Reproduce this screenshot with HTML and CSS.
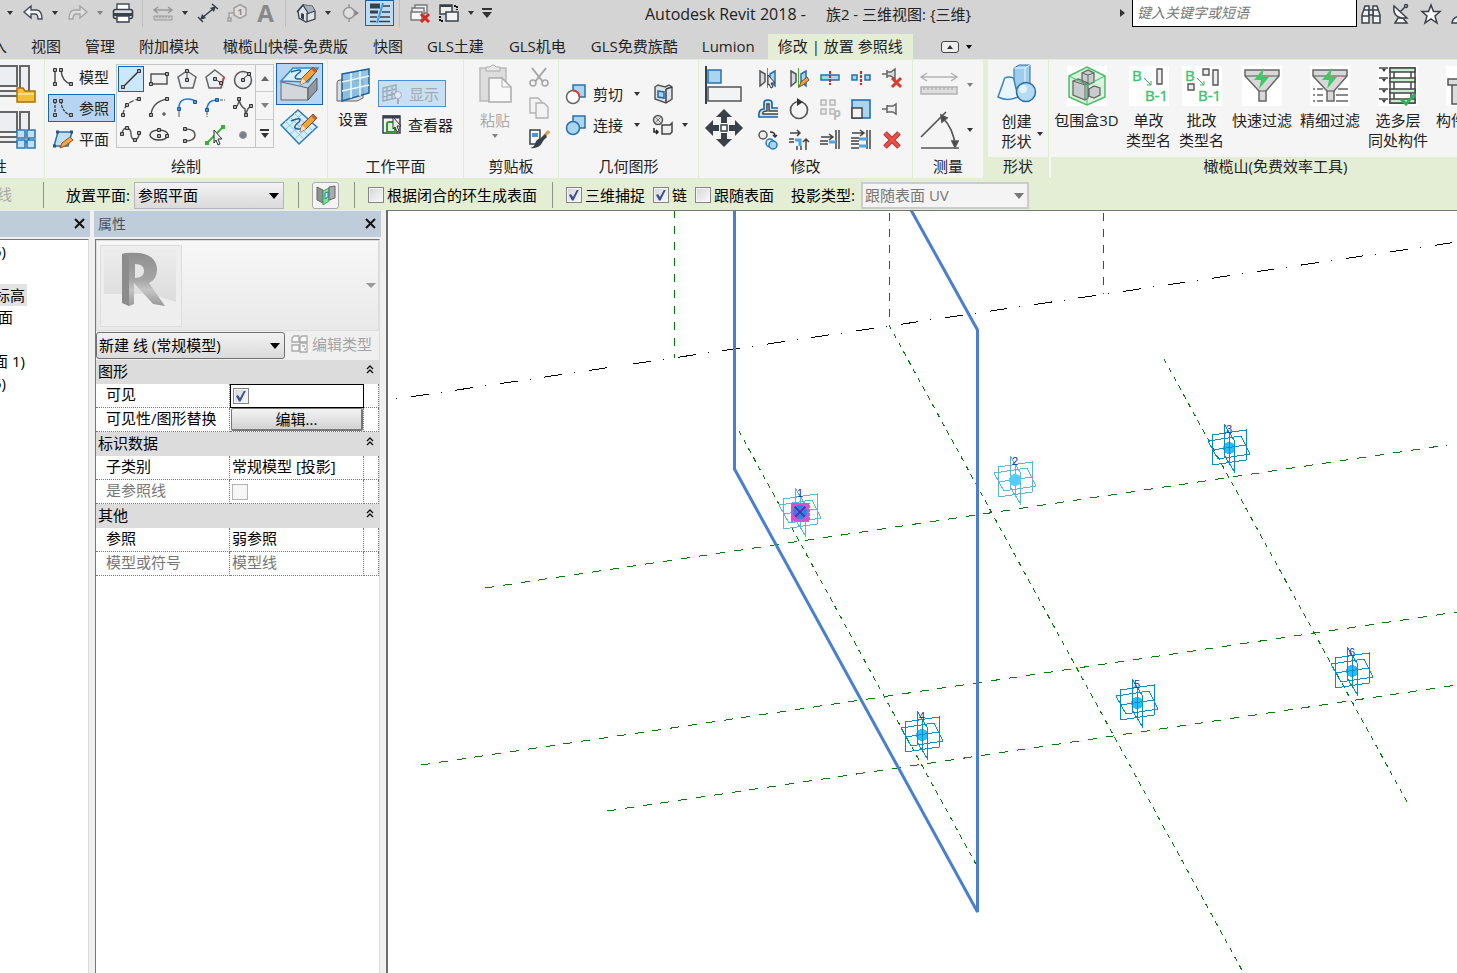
FILE: index.html
```html
<!DOCTYPE html>
<html lang="zh-CN">
<head>
<meta charset="utf-8">
<title>Autodesk Revit 2018</title>
<link rel="stylesheet" href="styles.css">
</head>
<body>
<div class="app">

<header class="titlebar">
  <div class="quick">
    <i class="drop"></i>
    <button class="tool" aria-label="放弃"><svg width="22" height="20" viewBox="0 0 22 20"><path d="M2 9 9 3v4h6q5 1 5 9h-4q0-5-3-5H9v4z" fill="#f4f4f4" stroke="#454b55" stroke-width="1.4"/></svg></button>
    <i class="drop"></i>
    <button class="tool" aria-label="重做"><svg width="22" height="20" viewBox="0 0 22 20"><path d="M20 9 13 3v4H7q-5 1-5 9h4q0-5 3-5h4v4z" fill="#dedede" stroke="#a5a5a5" stroke-width="1.4"/></svg></button>
    <i class="drop dim"></i>
    <button class="tool" aria-label="打印"><svg width="22" height="20" viewBox="0 0 22 20"><path d="M5 1h12v7H5z" fill="#fff" stroke="#454b55" stroke-width="1.4"/><rect x="1.500" y="6.500" width="19" height="9" rx="2" fill="#d9dde2" stroke="#39404a" stroke-width="1.6"/><path d="M2 10h18v3H2z" fill="#39404a"/><path d="M5 13h12v6H5z" fill="#fff" stroke="#39404a" stroke-width="1.4"/></svg></button>
    <i class="bar"></i>
    <button class="tool" aria-label="测量"><svg width="22" height="20" viewBox="0 0 22 20" fill="none" stroke="#999"><path d="M2 7h18M6 4 2 7l4 3M16 4l4 3-4 3" stroke-width="1.500"/><path d="M2 13h18v4H2z" fill="#ccc"/><path d="M5 13v2m3-2v2m3-2v2m3-2v2m3-2v2"/></svg></button>
    <i class="drop"></i>
    <button class="tool" aria-label="对齐尺寸标注"><svg width="22" height="20" viewBox="0 0 22 20"><path d="m5 15 12-10M1 14l5 5M15 1l6 5" stroke="#39404a" stroke-width="1.500"/><path d="m3 17 2-6 4 4zM19 3l-6 2 4 4z" fill="#39404a"/></svg></button>
    <button class="tool" aria-label="按类别标记"><svg width="22" height="20" viewBox="0 0 22 20"><path d="M2 15h3v3H2zM3 15v-5h5M14 1.500l6 3.500v7l-6 3.500L8 12V5z" fill="#dedede" stroke="#a0a0a0" stroke-width="1.500"/><text class="glyph-tag" x="14" y="12">1</text></svg></button>
    <button class="tool" aria-label="文字"><span class="letter-a">A</span></button>
    <i class="bar"></i>
    <button class="tool" aria-label="默认三维视图"><svg width="22" height="20" viewBox="0 0 22 20"><path d="m3 8 5-6 9 1 3 5v8l-9 3-7-4z" fill="#dfe3e8" stroke="#39404a" stroke-width="1.300"/><path d="m8 2 9 1 3 5-7 2z" fill="#aab1ba"/><path d="m2 9 6-7 5 8M12 10v9M12 11l8-3" fill="none" stroke="#39404a" stroke-width="1.300"/><path d="m6 10 3 1v6l-3-2z" fill="#39404a"/></svg></button>
    <i class="drop"></i>
    <button class="tool" aria-label="剖面"><svg width="22" height="20" viewBox="0 0 22 20"><path d="m9 3 10 7-10 7z" fill="#858585"/><circle cx="9" cy="10" r="5.500" fill="#e0e0e0" stroke="#999" stroke-width="1.500"/><path d="M9 1v3m0 12v3" stroke="#999" stroke-width="1.500"/></svg></button>
    <button class="tool picked" aria-label="细线"><svg width="24" height="22" viewBox="0 0 24 22"><path d="M15 4h7M14 10h8M2 15h7m3 0h10M2 19.500h6m3 0h11" stroke="#39404a" stroke-width="1.500"/><path d="M2 4h10" stroke="#39404a" stroke-width="5"/><path d="M2 10h8" stroke="#39404a" stroke-width="3"/><path d="m9 21 6-20" stroke="#3c9bf0" stroke-width="2"/></svg></button>
    <i class="bar"></i>
    <button class="tool" aria-label="关闭隐藏窗口"><svg width="22" height="20" viewBox="0 0 22 20"><path d="M6 2h12v8H6z" fill="#eee" stroke="#777" stroke-width="1.400"/><path d="M3 5h12v8H3z" fill="#eee" stroke="#777" stroke-width="1.400"/><path d="M2 9h11v8H2z" fill="#f7f7f7" stroke="#777" stroke-width="1.400"/><path d="m12 11 8 8m0-8-8 8" stroke="#d02c22" stroke-width="3"/></svg></button>
    <button class="tool" aria-label="切换窗口"><svg width="22" height="20" viewBox="0 0 22 20"><path d="M2 2h12v9H2z" fill="#eee" stroke="#39404a" stroke-width="1.500"/><path d="M2 3h12" stroke="#39404a" stroke-width="2"/><path d="M8 9h12v9H8z" fill="#f4f4f4" stroke="#39404a" stroke-width="1.500"/><path d="M16 3h3v4M2 13v5h4" fill="none" stroke="#111" stroke-width="2" stroke-dasharray="2 1"/></svg></button>
    <i class="drop"></i>
    <button class="custom" aria-label="自定义快速访问工具栏"><i class="drop"></i></button>
  </div>
  <div class="caption"><span class="product">Autodesk Revit 2018 -</span><span>族2 - 三维视图: {三维}</span></div>
  <div class="help">
    <i class="tri-right"></i>
    <input class="search" type="text" placeholder="键入关键字或短语" aria-label="搜索">
    <button class="hbtn" aria-label="查找"><svg width="22" height="22" viewBox="0 0 22 22" fill="#f4f4f4" stroke="#39404a" stroke-width="1.500"><path d="M2 20v-8l3-9h4v17zM20 20v-8l-3-9h-4v17z"/><path d="M9 7h4v5H9zM2 13h7m4 0h7M4 7h5m4 0h5"/></svg></button>
    <button class="hbtn" aria-label="通讯中心"><svg width="22" height="22" viewBox="0 0 22 22" fill="#f4f4f4" stroke="#39404a" stroke-width="1.500"><path d="m5 20 3-5h5l4 5z"/><path d="M4 3q-2 13 13 12zM10 9l5-5"/><circle cx="16" cy="3" r="1.500"/></svg></button>
    <button class="hbtn" aria-label="收藏夹"><svg width="22" height="22" viewBox="0 0 22 22"><path d="m11 2 2.500 6.500H20l-5 4.500 2 7-6-4-6 4 2-7-5-4.500h6.500z" fill="#fafafa" stroke="#39404a" stroke-width="1.500"/></svg></button>
    <button class="hbtn" aria-label="登录"><svg width="22" height="22" viewBox="0 0 22 22"><circle cx="13" cy="7" r="4" fill="#eee" stroke="#39404a"/><path d="M2 20q1-7 10-7t10 7z" fill="#eee" stroke="#39404a" stroke-width="1.500"/></svg></button>
  </div>
</header>

<nav class="tabs">
  <button class="tab first">插入</button><button class="tab">视图</button><button class="tab">管理</button><button class="tab">附加模块</button><button class="tab latin">橄榄山快模-免费版</button><button class="tab">快图</button><button class="tab latin">GLS土建</button><button class="tab latin">GLS机电</button><button class="tab">GLS免费族酷</button><button class="tab latin">Lumion</button><button class="tab active">修改 | 放置 参照线</button>
  <button class="minimize" aria-label="最小化功能区"><span class="mini-box"></span><i class="drop black"></i></button>
</nav>

<section class="ribbon">
  <div class="panel p-prop">
    <div class="body">
      <button class="cut" aria-label="族类型"><svg width="38" height="42" viewBox="0 0 38 42"><path d="M-2 2h19v20H-2zM20 2h9v30H-2v-5h22z" fill="#eceef1" stroke="#666" stroke-width="2"/><path d="M17 24h6l2 3h10v11H17z" fill="#f3bf3b" stroke="#a97306" stroke-width="1.500"/><path d="M18 30h16" stroke="#ffdf85" stroke-width="2"/></svg></button>
      <button class="cut" aria-label="属性"><svg width="38" height="42" viewBox="0 0 38 42"><path d="M-2 2h19v20H-2zM20 2h9v30H-2v-5h22z" fill="#eceef1" stroke="#666" stroke-width="2"/><path d="M17 20h8v8h-8zm10 0h8v8h-8zM17 30h8v8h-8zm10 0h8v8h-8z" fill="#bfe1f7" stroke="#2b7cbd" stroke-width="1.600"/></svg></button>
    </div>
    <div class="label cutlabel">属性</div>
  </div>

  <div class="panel p-draw">
    <div class="body">
      <div class="stack">
        <button class="row"><svg width="22" height="22" viewBox="0 0 22 22"><path d="M3 4v14M9 4q1 12 10 14" fill="none" stroke="#444" stroke-width="1.400"/><path d="M1.500 2.500h3v3h-3zm0 14h3v3h-3zm6-14h3v3h-3zm10 14h3v3h-3z" fill="#aaa" stroke="#333"/></svg>模型</button>
        <button class="row on"><svg width="22" height="22" viewBox="0 0 22 22"><path d="M3 4v14M9 4q1 12 10 14" fill="none" stroke="#444" stroke-width="1.400" stroke-dasharray="3 1"/><path d="M1.500 2.500h3v3h-3zm0 14h3v3h-3zm6-14h3v3h-3zm10 14h3v3h-3z" fill="#aaa" stroke="#333"/></svg>参照</button>
        <button class="row"><svg width="22" height="22" viewBox="0 0 22 22"><path d="M6 4h14l-4 14H2z" fill="#bfe0f5" stroke="#2b6ea8" stroke-width="1.500"/><path d="M4 2.500h3v3H4zm14 0h3v3h-3zm-17 14h3v3H1z" fill="#36536c"/><path d="m8 20 2-5 8-6 3 3-8 6z" fill="#f2a93b" stroke="#a9481a"/></svg>平面</button>
      </div>
      <div class="gallery">
        <div class="cells">
          <button class="cell on" aria-label="直线"><svg width="22" height="22" viewBox="0 0 22 22"><path d="M3 19 19 3" stroke="#333" stroke-width="1.500"/><path d="M1.500 17.500h3v3h-3zm16-16h3v3h-3z" fill="#aaa" stroke="#333"/></svg></button>
          <button class="cell" aria-label="矩形"><svg width="22" height="22" viewBox="0 0 22 22"><path d="M3 6h16v10H3z" fill="#eef0f2" stroke="#555" stroke-width="1.500"/><path d="M1.500 14.500h3v3h-3zm16-10h3v3h-3z" fill="#aaa" stroke="#333"/></svg></button>
          <button class="cell" aria-label="内接多边形"><svg width="22" height="22" viewBox="0 0 22 22"><path d="m11 3 9 6-3 11H5L2 9z" fill="#eef0f2" stroke="#666" stroke-width="1.500"/><path d="M11 4v7" stroke="#444"/><path d="M9.500 1.500h3v3h-3zm0 9h3v3h-3z" fill="#aaa" stroke="#333"/></svg></button>
          <button class="cell" aria-label="外接多边形"><svg width="22" height="22" viewBox="0 0 22 22"><path d="m11 2 9 7-3 11H5L2 9z" fill="#eef0f2" stroke="#666" stroke-width="1.500"/><path d="m20 9-3 11" stroke="#e33" stroke-width="2" stroke-dasharray="4 1"/><path d="m11 11 6 4" stroke="#444"/><path d="M9.500 9.500h3v3h-3zm6 4h3v3h-3z" fill="#aaa" stroke="#333"/></svg></button>
          <button class="cell" aria-label="圆形"><svg width="22" height="22" viewBox="0 0 22 22"><circle cx="11" cy="12" r="8.500" fill="#eef0f2" stroke="#555" stroke-width="1.500"/><path d="m11 11 6-5" stroke="#444"/><path d="M9.500 10.500h3v3h-3zm6-6h3v3h-3z" fill="#aaa" stroke="#333"/></svg></button>
          <button class="cell" aria-label="起点-终点-半径弧"><svg width="22" height="22" viewBox="0 0 22 22"><path d="M3 19Q4 6 19 3" fill="none" stroke="#555" stroke-width="1.400" stroke-dasharray="5 2"/><path d="M1.500 17.500h3v3h-3zm4-10h3v3h-3zm12-6h3v3h-3z" fill="#aaa" stroke="#333"/></svg></button>
          <button class="cell" aria-label="圆心-端点弧"><svg width="22" height="22" viewBox="0 0 22 22"><path d="M3 19Q4 6 19 3" fill="none" stroke="#555" stroke-width="1.400"/><path d="M1.500 17.500h3v3h-3zm16-16h3v3h-3z" fill="#aaa" stroke="#333"/><path d="M14 18h4m-2-2v4" stroke="#333"/></svg></button>
          <button class="cell" aria-label="相切-端点弧"><svg width="22" height="22" viewBox="0 0 22 22"><path d="M3 14Q2 3 12 3q5 0 8 3" fill="none" stroke="#2a7ad0" stroke-width="1.600"/><path d="M3 15v6" stroke="#555"/><path d="M1.500 11.500h3v3h-3zm16-7h3v3h-3z" fill="#4a93dc" stroke="#165a9f"/></svg></button>
          <button class="cell" aria-label="圆角弧"><svg width="22" height="22" viewBox="0 0 22 22"><path d="M3 14Q3 4 13 4" fill="none" stroke="#2a7ad0" stroke-width="1.600"/><path d="M3 16v5m13-17h5" stroke="#555" stroke-dasharray="3 1"/><path d="M1.500 12.500h3v3h-3zm10-10h3v3h-3z" fill="#4a93dc" stroke="#165a9f"/></svg></button>
          <button class="cell" aria-label="样条曲线"><svg width="22" height="22" viewBox="0 0 22 22"><path d="M3 11q3 0 4-7 2 7 6 9 0 3 1 6 1-8 6-9" fill="none" stroke="#555" stroke-width="1.500"/><path d="M1.500 9.500h3v3h-3zm4-8h3v3h-3zm7 16h3v3h-3zm5-9h3v3h-3z" fill="#aaa" stroke="#333"/></svg></button>
          <button class="cell" aria-label="通过点的样条曲线"><svg width="22" height="22" viewBox="0 0 22 22"><path d="M2 9q1-5 5-5 4 1 4 6t4 6q4-1 4-7" fill="none" stroke="#555" stroke-width="1.400"/><path d="M.5 8.500h3v3h-3zm5-6h3v3h-3zm8 12h3v3h-3zm4-7h3v3h-3z" fill="#aaa" stroke="#333"/></svg></button>
          <button class="cell" aria-label="椭圆"><svg width="22" height="22" viewBox="0 0 22 22"><ellipse cx="11" cy="11" rx="9" ry="5" fill="#eef0f2" stroke="#444" stroke-width="1.500"/><path d="M9.500 4.500h3v3h-3zm0 6h3v3h-3zm8 0h3v3h-3z" fill="#aaa" stroke="#333"/></svg></button>
          <button class="cell" aria-label="半椭圆"><svg width="22" height="22" viewBox="0 0 22 22"><path d="M9 5q10 0 10 6T9 17" fill="none" stroke="#555" stroke-width="1.500"/><path d="M7.500 3.500h3v3h-3zm0 12h3v3h-3z" fill="#aaa" stroke="#333"/></svg></button>
          <button class="cell" aria-label="拾取线"><svg width="22" height="22" viewBox="0 0 22 22"><path d="M3 19 19 3" stroke="#35b52c" stroke-width="2"/><path d="M1 17h4v4H1zM17 1h4v4h-4z" fill="#35b52c"/><path d="m10 6 8 9h-4l2 5-2 1-2-5-2 3z" fill="#eee" stroke="#333"/></svg></button>
          <button class="cell" aria-label="点图元"><svg width="22" height="22" viewBox="0 0 22 22"><circle cx="11" cy="11" r="3.500" fill="#777c85" stroke="#999"/></svg></button>
        </div>
        <div class="scroll"><button aria-label="上一行"><i class="up"></i></button><button aria-label="下一行"><i class="drop grey"></i></button><button aria-label="更多"><i class="drop more"></i></button></div>
      </div>
      <div class="bigpair">
        <button class="big on" aria-label="在面上绘制"><svg width="42" height="38" viewBox="0 0 42 38"><path d="m2 17 27 6v12H2z" fill="#d3d6da" stroke="#666"/><path d="m29 23 9-10v12l-9 10z" fill="#9299a1" stroke="#555"/><path d="m2 16 12-13h25l-10 14z" fill="#d7effc" stroke="#2c8dca" stroke-width="1.500"/><path d="M12 7q12-4 9 0-9 7-1 7h5" fill="none" stroke="#1c6299" stroke-width="1.500"/><path d="m21 20 2-7L34 2l4 4-11 11z" fill="#f0a53b" stroke="#7d4a20"/><path d="m23 13 4 4-6 3z" fill="#f5dfc0"/><path d="m32 4 2-2 4 4-2 2z" fill="#c8613a"/></svg></button>
        <button class="big" aria-label="在工作平面上绘制"><svg width="42" height="38" viewBox="0 0 42 38"><path d="M2 17 19 2l19 17-18 17z" fill="#d7effc" stroke="#2c7cb8" stroke-width="1.500"/><path d="m6 13 19 18M11 9l18 18M15 5l19 18M7 21 23 6M11 26 29 11M16 31l17-16" stroke="#8cc5e8"/><path d="M12 13q12-5 8 1-8 6-1 7h5" fill="none" stroke="#1c6299" stroke-width="1.500"/><path d="m21 24 2-7L34 6l4 4-11 11z" fill="#f0a53b" stroke="#7d4a20"/><path d="m23 17 4 4-6 3z" fill="#f5dfc0"/><path d="m32 8 2-2 4 4-2 2z" fill="#c8613a"/></svg></button>
      </div>
    </div>
    <div class="label">绘制</div>
  </div>

  <div class="panel p-plane">
    <div class="body">
      <button class="vbtn"><svg width="38" height="38" viewBox="0 0 38 38"><path d="M3 16q0-3 3-3h20q3 0 3 3v15l-6 3H3z" fill="#d9dce0" stroke="#666"/><path d="m8 7 27-5v24L8 34z" fill="#79b7df" fill-opacity=".8" stroke="#1d6399" stroke-width="1.500"/><path d="m8 15 27-6M8 24l27-6M17 6v25M26 4v25" stroke="#e8f6ff" stroke-width="1.500"/></svg><span>设置</span></button>
      <div class="stack2">
        <button class="row show" disabled><svg width="22" height="22" viewBox="0 0 22 22"><path d="m2 5 13-3v13L2 18zM2 9l13-3M2 14l13-4M6 4v13m5-14v13" fill="none" stroke="#9fadbb" stroke-width="1.500"/><circle cx="17" cy="12" r="3.500" fill="#e4ebf2" stroke="#9fadbb"/><path d="M17 16v5" stroke="#9fadbb" stroke-width="2"/></svg>显示</button>
        <button class="row"><svg width="22" height="22" viewBox="0 0 22 22"><path d="M2 2h17v17H2z" fill="#f3f3f3" stroke="#39404a" stroke-width="1.500"/><path d="M2 3h17" stroke="#39404a" stroke-width="3"/><path d="M6 10q0-2 2-2h6v10H6z" fill="#dff1dc" stroke="#379535" stroke-width="2"/><path d="m12 3 8 9h-4l2 5-2 1-2-5-2 2z" fill="#eee" stroke="#333"/></svg>查看器</button>
      </div>
    </div>
    <div class="label">工作平面</div>
  </div>

  <div class="panel p-clip">
    <div class="body">
      <button class="vbtn" disabled><svg width="38" height="40" viewBox="0 0 38 40"><path d="M4 4h26v33H4z" fill="#ddd" stroke="#bbb" stroke-width="1.500"/><path d="M10 7V3h4q3-4 6 0h4v4z" fill="#e8e8e8" stroke="#aaa"/><path d="M13 14h13l9 9v15H13z" fill="#f8f8f8" stroke="#aaa" stroke-width="1.500"/><path d="M26 14v9h9" fill="none" stroke="#aaa"/></svg><span>粘贴</span><i class="drop grey"></i></button>
      <div class="trio">
        <svg width="22" height="22" viewBox="0 0 22 22" fill="none" stroke="#a5a5a5" stroke-width="2"><path d="m4 2 11 14M18 2 7 16"/><circle cx="5" cy="17" r="3" stroke-width="1.500"/><circle cx="17" cy="17" r="3" stroke-width="1.500"/></svg>
        <svg width="22" height="22" viewBox="0 0 22 22" fill="#f3f3f3" stroke="#b3b3b3" stroke-width="1.400"><path d="M2 1h8l4 4v11H2z"/><path d="M8 6h8l4 4v11H8z"/></svg>
        <svg width="22" height="22" viewBox="0 0 22 22"><path d="M2 2h10v14H2z" fill="#f7f7f7" stroke="#39404a" stroke-width="1.500"/><path d="M4 5h6v4H4z" fill="#4f94ca"/><path d="m21 3-8 9" stroke="#d89a4d" stroke-width="3"/><path d="m17 6-4 4q-5 1-6 6-1 3-5 4 9 1 12-5 1-3 5-6z" fill="#39404a"/></svg>
      </div>
    </div>
    <div class="label">剪贴板</div>
  </div>

  <div class="panel p-geo">
    <div class="body">
      <div class="grow">
        <button class="row"><svg width="22" height="22" viewBox="0 0 22 22"><path d="M8 2h12v12H8z" fill="#a9d5f0" stroke="#2870a8" stroke-width="1.500"/><circle cx="8" cy="14" r="6.500" fill="#fff" stroke="#666" stroke-width="1.500"/><path d="M8 7.500a6.500 6.500 0 0 1 6.500 6.500" fill="none" stroke="#e33" stroke-width="2"/></svg>剪切<i class="drop"></i></button>
        <button class="small" aria-label="拆分面"><svg width="22" height="22" viewBox="0 0 22 22"><path d="m3 4 3-2 7 2 4-2 3 2v12l-6 4-11-4z" fill="#dfe3e8" stroke="#555" stroke-width="1.500"/><path d="m14 6 6-2M14 6v14" stroke="#39404a" stroke-width="1.500"/><path d="m6 8 6 1v6l-6-1z" fill="#a8d4f1" stroke="#2368a1" stroke-width="1.500"/></svg></button>
      </div>
      <div class="grow">
        <button class="row"><svg width="22" height="22" viewBox="0 0 22 22"><path d="M8 2h12v12H8z" fill="#a9d5f0" stroke="#2870a8" stroke-width="1.500"/><circle cx="8" cy="14" r="6.500" fill="#a9d5f0" stroke="#2870a8" stroke-width="1.500"/></svg>连接<i class="drop"></i></button>
        <button class="small" aria-label="连接端切割"><svg width="22" height="22" viewBox="0 0 22 22"><circle cx="6" cy="6" r="4.500" fill="#ddd" stroke="#555" stroke-width="1.500"/><path d="m3 3 6 6m0-6-6 6" stroke="#777"/><path d="M10 11h8l2-2v9l-2 2h-8z" fill="#eee" stroke="#444" stroke-width="1.500"/><path d="M2 14v4h4m-2-2 2 2-2 2" fill="none" stroke="#222" stroke-width="1.500"/></svg><i class="drop"></i></button>
      </div>
    </div>
    <div class="label">几何图形</div>
  </div>

  <div class="panel p-modify">
    <div class="body">
      <div class="bigpair tall">
        <svg width="40" height="40" viewBox="0 0 40 40"><path d="M2 1v38" stroke="#39404a" stroke-width="2"/><path d="M4 5h13v13H4z" fill="#a9d5f0" stroke="#2870a8" stroke-width="1.500"/><path d="M4 22h33v14H4z" fill="#f2f3f5" stroke="#555" stroke-width="1.500"/></svg>
        <svg width="40" height="40" viewBox="0 0 40 40" fill="#39404a"><path d="m20 1 8 8h-5v6h-6V9h-5zM20 39l8-8h-5v-6h-6v6h-5zM1 20l8-8v5h6v6H9v5zM39 20l-8-8v5h-6v6h6v5z"/><path d="M17 17h6v6h-6z" fill="#fff" stroke="#39404a" stroke-width="1.500"/></svg>
      </div>
      <div class="mods">
        <svg viewBox="0 0 22 22"><path d="m3 4 5 3v8l-5 4z" fill="#d5d8dc" stroke="#555" stroke-width="1.500"/><path d="m18 4-5 3v8l5 4z" fill="#a9d5f0" stroke="#2870a8" stroke-width="1.500"/><path d="M10.500 1v20" stroke="#4caf35"/><path d="m11 8 7 8h-4l2 4-2 1-2-4-1 1z" fill="#eee" stroke="#333"/></svg>
        <svg viewBox="0 0 22 22"><path d="m3 4 5 3v8l-5 4z" fill="#d5d8dc" stroke="#555" stroke-width="1.500"/><path d="m18 4-5 3v8l5 4z" fill="#a9d5f0" stroke="#2870a8" stroke-width="1.500"/><path d="M10.500 1v20" stroke="#4caf35"/><path d="m11 20 2-5 6-5 2 3-6 5z" fill="#f0a53b" stroke="#7d4a20"/></svg>
        <svg viewBox="0 0 22 22"><path d="M2 8h18v5H2z" fill="#a9d5f0" stroke="#2870a8" stroke-width="1.500"/><path d="M11 4v14" stroke="#d22" stroke-width="2" stroke-dasharray="3 1"/></svg>
        <svg viewBox="0 0 22 22"><path d="M2 8h5v5H2zm13 0h5v5h-5z" fill="#a9d5f0" stroke="#2870a8" stroke-width="1.500"/><path d="M11 4v14" stroke="#d22" stroke-width="2" stroke-dasharray="3 1"/></svg>
        <svg viewBox="0 0 22 22"><path d="M1 7h5M6 3v8M6 5h4l4-3v10l-4-3H6" fill="#ddd" stroke="#666" stroke-width="1.500"/><path d="m11 11 9 9m0-9-9 9" stroke="#d63b31" stroke-width="3"/></svg>
        <svg viewBox="0 0 22 22"><path d="M21 19H2q-1-8 5-8V5q0-3 4-3t4 3v5h6" fill="#c7e4f7" stroke="#1d67ae" stroke-width="1.700"/><path d="M21 16H6q-1-3 4-3V6h2v7h9" fill="#fff" stroke="#444" stroke-width="1.500"/></svg>
        <svg viewBox="0 0 22 22"><circle cx="11" cy="12" r="8.500" fill="none" stroke="#555" stroke-width="1.700"/><path d="m9 0 6 4-6 4z" fill="#333"/></svg>
        <svg viewBox="0 0 22 22"><path d="M2 2h5v5H2zm9 0h5v5h-5zM2 11h5v5H2zm14 5h-5v-5h5" fill="#eee" stroke="#b7b7b7" stroke-width="1.500"/><text class="glyph-p" x="18" y="19">p</text></svg>
        <svg viewBox="0 0 22 22"><path d="M2 2h18v18H2z" fill="#a9d5f0" stroke="#1d67ae" stroke-width="1.500"/><path d="M2 10h10v10H2z" fill="#f5f5f5" stroke="#444" stroke-width="1.500"/></svg>
        <svg viewBox="0 0 22 22"><path d="M1 11h5M6 7v8M6 8h6l3-2v10l-3-2H6" fill="#eee" stroke="#666" stroke-width="1.500"/></svg>
        <svg viewBox="0 0 22 22"><circle cx="6" cy="6" r="4" fill="#eee" stroke="#555" stroke-width="1.500"/><circle cx="13" cy="14" r="4" fill="#d8effc" stroke="#2a77bb" stroke-width="1.500"/><circle cx="16" cy="16" r="4" fill="#a9d5f0" stroke="#2a77bb" stroke-width="1.500"/><path d="M13 3q5 0 5 4m-2-1 2 2 2-2" fill="none" stroke="#333" stroke-width="1.500"/></svg>
        <svg viewBox="0 0 22 22"><path d="M2 4h10M9 1l3 3-3 3" fill="none" stroke="#444" stroke-width="1.500"/><path d="M1 10h5m-5 3h5M9 17v4M13 17v4M18 21V10m-3 3 3-3 3 3" fill="none" stroke="#444" stroke-width="1.500"/><path d="M7 11h5v6" fill="none" stroke="#4ba3e8" stroke-width="3"/></svg>
        <svg viewBox="0 0 22 22"><path d="M2 8h12m-4-3 4 3-4 3M1 12h8m-8 3h8M17 1v19M20 1v19" fill="none" stroke="#444" stroke-width="1.500"/><path d="M10 13h7" stroke="#4ba3e8" stroke-width="3"/></svg>
        <svg viewBox="0 0 22 22"><path d="M2 4h12m-4-3 4 3-4 3M1 9h8m-8 3h8m-8 3h8m-8 4h8M17 1v19M20 1v19" fill="none" stroke="#444" stroke-width="1.500"/><path d="M9 10h8M9 17h8" stroke="#4ba3e8" stroke-width="3"/></svg>
        <svg viewBox="0 0 22 22"><path d="m4 4 14 14m0-14L4 18" stroke="#b5322b" stroke-width="5"/><path d="m4 4 14 14m0-14L4 18" stroke="#ea5047" stroke-width="3"/></svg>
      </div>
    </div>
    <div class="label">修改</div>
  </div>

  <div class="panel p-measure">
    <div class="body">
      <div class="mrow"><svg width="40" height="34" viewBox="0 0 40 34" fill="none" stroke="#b3b3b3" stroke-width="1.500"><path d="M2 9h36M8 5 2 9l6 4M32 5l6 4-6 4"/><path d="M2 19h36v7H2z" fill="#ddd"/><path d="M5 19v3m4-3v3m4-3v3m4-3v3m4-3v3m4-3v3m4-3v3m4-3v3"/></svg><i class="drop grey"></i></div>
      <div class="mrow"><svg width="40" height="40" viewBox="0 0 40 40" fill="none" stroke="#555" stroke-width="1.700"><path d="M2 38h38M2 27 27 2M23 7q12 12 13 29"/><path d="m22 5 6 3-5 4zM33 31h6l-3 6z" fill="#444"/></svg><i class="drop"></i></div>
    </div>
    <div class="label">测量</div>
  </div>

  <div class="panel p-form tinted">
    <div class="body">
      <button class="vbtn form"><svg width="42" height="42" viewBox="0 0 42 42"><path d="m18 5 5-3h11v20l-5 3H18z" fill="#9dcdea" stroke="#2870a8"/><path d="M18 5h11l5-3M29 5v20" fill="none" stroke="#e8f6ff"/><path d="M8 17q0-3 5-3t5 3l4 17q-10 5-20 0z" fill="#eaf5fc" stroke="#3c86c0" stroke-width="1.500"/><circle cx="30" cy="29" r="9.500" fill="#b5dcf2" stroke="#2870a8" stroke-width="1.500"/><circle cx="27" cy="26" r="4" fill="#e3f4fd"/></svg><span>创建<br>形状</span></button><i class="drop formdrop"></i>
    </div>
    <div class="label">形状</div>
  </div>

  <div class="panel p-gls tinted">
    <div class="body">
      <button class="gbtn box3d"><svg viewBox="0 0 40 40"><path d="m20 1 18 9v21l-18 8-18-8V10z" fill="#d9f3df" stroke="#4abf68" stroke-width="1.500"/><path d="m15 7 6-3 6 3v9l-6 3-6-3zM22 23l5-3 6 2v7l-6 3-5-2zM6 15l5-2 10 4v15l-3 2-12-5z" fill="#c9cccc" stroke="#666" stroke-width="1.300"/><path d="m15 7 6 2 6-2m-6 2v9M6 15l12 4 3-2m-3 2v14" fill="none" stroke="#666"/><path d="m2 10 18 9 18-9M20 19v20" fill="none" stroke="#3fbd60"/></svg><span>包围盒3D</span></button>
      <button class="gbtn"><svg viewBox="0 0 40 40"><text class="glyph-b" x="3" y="15">B</text><text class="glyph-b" x="16" y="35">B-1</text><path d="m15 12 7 7m0-4v4h-4" fill="none" stroke="#3ab160"/><path d="M28 3h5v15h-5z" fill="#eee" stroke="#555" stroke-width="1.400"/></svg><span>单改<br>类型名</span></button>
      <button class="gbtn"><svg viewBox="0 0 40 40"><text class="glyph-b" x="3" y="15">B</text><text class="glyph-b" x="16" y="35">B-1</text><path d="m15 12 7 7m0-4v4h-4" fill="none" stroke="#3ab160"/><path d="M21 3h6v6h-6zM31 4h5v15h-5zM6 18h6v6H6z" fill="#eee" stroke="#555" stroke-width="1.400"/></svg><span>批改<br>类型名</span></button>
      <button class="gbtn"><svg viewBox="0 0 40 40"><path d="M3 4h34v6L24 25v10h-7V25L3 10z" fill="#d8d8d8" stroke="#666" stroke-width="1.500"/><path d="M3 10h34M17 25h7" stroke="#555"/><path d="m22 2-10 12h7l-2 9 10-12h-7z" fill="#3ccb65"/></svg><span>快速过滤</span></button>
      <button class="gbtn"><svg viewBox="0 0 40 40"><path d="M3 23h2m2 0h6M3 29h2m2 0h6M3 35h2m2 0h6M28 23h10M26 29h12M26 35h12" stroke="#666" stroke-width="1.500"/><path d="M3 4h34v6L24 25v10h-7V25L3 10z" fill="#d8d8d8" stroke="#666" stroke-width="1.500"/><path d="M3 10h34M17 25h7" stroke="#555"/><path d="m22 2-10 12h7l-2 9 10-12h-7z" fill="#3ccb65"/></svg><span>精细过滤</span></button>
      <button class="gbtn"><svg viewBox="0 0 40 40"><path d="M12 2h25v35H12zM16 2v35M33 2v35" fill="#fff" stroke="#444" stroke-width="1.500"/><path d="M12 2h25v4H12zm0 10h25v4H12zm0 11h25v4H12zm0 10h25v4H12z" fill="#c5efce" stroke="#444" stroke-width="1.400"/><path d="M1 2h9M1 12h9M1 23h9M1 33h9" stroke="#444" stroke-width="1.500"/><path d="m4 3 2 3 2-3m-4 10 2 3 2-3M4 24l2 3 2-3M4 34l2 3 2-3" fill="#333"/><path d="m23 33 5 5 9-10" fill="none" stroke="#2faf55" stroke-width="3"/></svg><span>选多层<br>同处构件</span></button>
      <button class="gbtn"><svg viewBox="0 0 40 40"><path d="M2 13h36v6H2zM6 19h10v19H6z" fill="#ddd" stroke="#555" stroke-width="1.500"/></svg><span>构件信息</span></button>
    </div>
    <div class="label">橄榄山(免费效率工具)</div>
  </div>
</section>

<section class="options">
  <div class="context">线</div>
  <div class="group g1"><label for="plane">放置平面:</label><span class="pick w-plane"><select id="plane"><option>参照平面</option></select></span></div>
  <div class="group g2"><button class="pickplane" aria-label="显示工作平面"><svg width="22" height="22" viewBox="0 0 22 22"><path d="m2 3 6 3v13l-6-3z" fill="#8b9290" stroke="#666"/><path d="m8 7 6-3v13l-6 4z" fill="#7fe39b" stroke="#3aa45a"/><path d="m14 3 6-1v12l-6 2z" fill="#a8adab" stroke="#666"/><path d="m10 9 3-1v5l-3 2z" fill="#c5f2ff" stroke="#2580a0"/></svg></button></div>
  <div class="group g3"><label><input type="checkbox">根据闭合的环生成表面</label></div>
  <div class="group g4"><label><input type="checkbox" checked>三维捕捉</label><label><input type="checkbox" checked>链</label><label><input type="checkbox">跟随表面</label></div>
  <div class="proj"><label for="proj">投影类型:</label><span class="pick w-proj off"><select id="proj" disabled><option>跟随表面 UV</option></select></span></div>
</section>

<main class="work">
  <aside class="browser">
    <div class="dockhead"><button class="close" aria-label="关闭项目浏览器"><svg width="12" height="12" viewBox="0 0 12 12"><path d="m1 1 9 9m0-9-9 9" stroke="#111" stroke-width="2"/></svg></button></div>
    <div class="tree">
      <div class="leaf e5">(5)</div><div class="leaf"></div><div class="leaf e24"><span class="sel">标高</span></div><div class="leaf e13">平面</div><div class="leaf"></div><div class="leaf e24">立面 1)</div><div class="leaf e5">(5)</div>
    </div>
  </aside>

  <aside class="props">
    <div class="dockhead"><span>属性</span><button class="close" aria-label="关闭属性"><svg width="12" height="12" viewBox="0 0 12 12"><path d="m1 1 9 9m0-9-9 9" stroke="#111" stroke-width="2"/></svg></button></div>
    <div class="sheet">
      <div class="preview">
        <div class="thumb"><svg width="80" height="80" viewBox="0 0 80 80"><defs><linearGradient id="steel" x1="0" y1="0" x2="0" y2="1"><stop offset="0" stop-color="#8f8f8f"/><stop offset=".5" stop-color="#a4a4a4"/><stop offset=".7" stop-color="#c4c4c4"/><stop offset="1" stop-color="#999"/></linearGradient><linearGradient id="haze" x1="0" y1="0" x2="0" y2="1"><stop offset="0" stop-color="#ececec"/><stop offset="1" stop-color="#dcdcdc"/></linearGradient></defs><path d="M3 4h72v52L50 48H3z" fill="url(#haze)"/><path fill-rule="evenodd" d="M21 8q4-2 18-1 17 3 17 17 0 9-8 13l16 23-12-2-19-21v21l-5 2-7-4zM34 18v14q9 0 9-7t-9-7z" fill="url(#steel)"/><path d="m21 8 7 3v49l-7-3z" fill="#8c8c8c"/></svg></div>
        <i class="drop grey wide"></i>
      </div>
      <div class="typerow"><span class="pick w-type"><select aria-label="类型"><option>新建 线 (常规模型)</option></select></span><button class="edittype" disabled><svg width="18" height="18" viewBox="0 0 18 18" fill="#f8f8f8" stroke="#aaa" stroke-width="1.300"><path d="m1 3 2-2h5v6H1zm8 0 2-2h5v6H9zM1 10h7v6H1zM9 8h7v9H9zM11 11h3m-1 3h2"/></svg>编辑类型</button></div>
      <table class="grid">
        <colgroup><col class="c-name"><col><col class="c-end"></colgroup>
        <tbody>
        <tr class="cat"><th colspan="3"><span>图形</span><svg width="8" height="9" viewBox="0 0 8 9"><path d="m1 4 3-3 3 3M1 8l3-3 3 3" fill="none" stroke="#111" stroke-width="1.400"/></svg></th></tr>
        <tr><td><label for="vis">可见</label></td><td class="focus"><input id="vis" type="checkbox" checked></td><td></td></tr>
        <tr><td>可见性/图形替换</td><td class="hasbtn"><button class="edit">编辑...</button></td><td></td></tr>
        <tr class="cat"><th colspan="3"><span>标识数据</span><svg width="8" height="9" viewBox="0 0 8 9"><path d="m1 4 3-3 3 3M1 8l3-3 3 3" fill="none" stroke="#111" stroke-width="1.400"/></svg></th></tr>
        <tr><td>子类别</td><td>常规模型 [投影]</td><td></td></tr>
        <tr class="ro"><td><label for="ref">是参照线</label></td><td class="check"><input id="ref" type="checkbox" disabled></td><td></td></tr>
        <tr class="cat"><th colspan="3"><span>其他</span><svg width="8" height="9" viewBox="0 0 8 9"><path d="m1 4 3-3 3 3M1 8l3-3 3 3" fill="none" stroke="#111" stroke-width="1.400"/></svg></th></tr>
        <tr><td>参照</td><td>弱参照</td><td></td></tr>
        <tr class="ro"><td>模型或符号</td><td>模型线</td><td></td></tr>
        </tbody>
      </table>
    </div>
  </aside>

  <section class="view" aria-label="三维视图">
    <svg class="scene">
      <defs>
        <g id="planes" fill="none">
          <path d="M-17-13 17-18V12L-17 17zM-21-7 12-12 21 6-11 11zM-5-24 5-8V23L-5 7zM-17 2 17-3M0-15V14"/>
        </g>
      </defs>
      <g transform="translate(-388 -211)">
        <g class="ref long">
          <path d="M485 588 1447 445"/><path d="M421 765 1457 612"/><path d="M607 811 1457 685"/>
        </g>
        <g class="ref short">
          <path d="M734 422 977 866"/><path d="M889 325 1243 972"/><path d="M1164 359 1407 802"/>
        </g>
        <g class="ref mid"><path d="M674.5 210V358"/><path d="M889.5 213V325"/><path d="M1103.500 213V294"/></g>
        <path class="level" d="M396 399 1457 242"/>
        <path class="outline" d="M734.500 200V469L977.500 912V330L906 201"/>
        <g class="mark soft" transform="translate(800 512)"><use href="#planes"/><rect class="snap" x="-9" y="-9" width="18" height="18"/><circle class="core" r="7"/><path class="cross" d="m-5-5 10 10m0-10L-5 5"/><text y="-15">1</text></g>
        <g class="mark soft" transform="translate(1015 480)"><use href="#planes"/><circle r="6"/><text y="-15">2</text></g>
        <g class="mark" transform="translate(1229 448)"><circle r="6"/><use href="#planes"/><text y="-15">3</text></g>
        <g class="mark" transform="translate(922 735)"><circle r="6"/><use href="#planes"/><text y="-15">4</text></g>
        <g class="mark" transform="translate(1137 703)"><circle r="6"/><use href="#planes"/><text y="-15">5</text></g>
        <g class="mark" transform="translate(1352 671)"><circle r="6"/><use href="#planes"/><text y="-15">6</text></g>
      </g>
    </svg>
  </section>
</main>
</div>
</body>
</html>
```
FILE: styles.css
```css
* { box-sizing: border-box; }
html, body { height: 100%; margin: 0; }
body { overflow: hidden; font: 15px/20px "Open Sans", "Noto Sans CJK SC", sans-serif; color: #222; }
button, input, select { font: inherit; color: inherit; }
button { border: 0; background: none; padding: 0; }
svg { display: block; flex: none; }
.app { height: 100vh; display: flex; flex-direction: column; background: #f0f0f0; overflow: hidden; }

.drop { display: block; flex: none; width: 0; height: 0; border: 3px solid transparent; border-top: 4px solid #333; border-bottom: 0; }
.drop.dim, .drop.grey { border-top-color: #808080; }
.drop.black { border-top-color: #000; }
.up { width: 0; height: 0; border: 4px solid transparent; border-bottom: 5px solid #666; border-top: 0; }
.bar { width: 1px; height: 28px; margin: 0 5px; background: #bdbdbd; }

.titlebar { flex: none; height: 34px; background: #d4d4d4; display: flex; align-items: flex-start; }
.quick { display: flex; align-items: center; height: 26px; padding-left: 2px; width: 645px; flex: none; }
.quick > .drop { margin: 0 5px; }
.tool { width: 29px; height: 26px; display: flex; align-items: center; justify-content: center; flex: none; }
.tool.picked { background: #bcdcf7; border: 1px solid #1763b0; }
.letter-a { font: 700 24px/26px "Open Sans", sans-serif; color: #888; }
.glyph-tag { font: 700 9px "Open Sans", sans-serif; fill: #888; text-anchor: middle; }
.custom { padding: 2px 3px; }
.custom .drop { border-width: 6px 5px 0; }
.custom::before { content: ""; display: block; height: 2px; background: #333; margin-bottom: 2px; }
.caption { display: flex; gap: 20px; height: 28px; align-items: center; white-space: nowrap; }
.product { font-size: 16px; }
.help { margin-left: auto; margin-right: -20px; display: flex; align-items: flex-start; flex: none; }
.tri-right { border: 4px solid transparent; border-left: 5px solid #333; border-right: 0; margin: 9px 7px 0 0; }
.search { width: 225px; height: 27px; border: 1px solid #000; border-top: 0; background: #fff; padding: 0 4px 2px; font-size: 14px; font-style: italic; border-radius: 0; }
.search::placeholder { color: #777; opacity: 1; }
.hbtn { width: 28px; height: 28px; margin-right: 2px; display: flex; align-items: center; justify-content: center; }

.tabs { flex: none; height: 26px; background: #d4d4d4; display: flex; border-bottom: 1px solid #e4eed6; overflow: hidden; }
.tab { padding: 0 12px 2px; white-space: nowrap; flex: none; }
.tab.latin { padding-right: 13px; }
.tab.first { margin-left: -35px; }
.tab.active { background: #e4eed4; padding: 0 10px 2px; }
.minimize { display: flex; align-items: center; gap: 7px; margin-left: 28px; }
.mini-box { width: 18px; height: 12px; border: 1px solid #444; border-radius: 3px; background: #eee; display: grid; place-items: center; }
.mini-box::before { content: ""; border: 3px solid transparent; border-bottom: 4px solid #333; border-top: 0; }

.ribbon { flex: none; height: 118px; display: flex; background: #f5f5f5; overflow: hidden; }
.panel { flex: none; display: flex; flex-direction: column; border-right: 1px solid #e1ecd3; }
.body { flex: 1; display: flex; min-height: 0; }
.label { height: 21px; line-height: 19px; text-align: center; white-space: nowrap; }
.tinted .label { background: #e4eed4; }
.row { display: flex; align-items: center; white-space: nowrap; }
.p-prop { width: 45px; }
.p-prop .body { flex-direction: column; padding-top: 4px; gap: 4px; }
.cutlabel { text-align: right; padding-right: 37px; direction: rtl; }
.p-draw { width: 283px; }
.p-draw .body { padding: 3px 4px 0 3px; }
.stack { display: flex; flex-direction: column; gap: 3px; width: 67px; }
.stack .row { height: 28px; padding-left: 3px; gap: 5px; border: 1px solid transparent; }
.stack .row.on { background: #b7d5f3; border-color: #1763b0; }
.gallery { display: flex; border: 1px solid #c6c6c6; margin: 1px 1px 0; height: 84px; }
.cells { display: grid; grid-template-columns: repeat(5, 28px); grid-template-rows: repeat(3, 28px); margin-right: -2px; }
.cell { display: grid; place-items: center; }
.cell.on { background: #cbe8fa; border: 1px solid #1763b0; margin: 1px; }
.scroll { width: 18px; border-left: 1px solid #c6c6c6; display: grid; grid-template-rows: repeat(3, 1fr); }
.scroll button { display: grid; place-items: center; align-content: center; border-bottom: 1px solid #ccc; }
.scroll .drop { border-width: 5px 4px 0; }
.scroll button:last-child { border: 0; }
.scroll button:last-child::before { content: ""; width: 9px; height: 2px; background: #333; margin-bottom: 2px; }
.bigpair { display: flex; flex-direction: column; gap: 1px; margin-left: auto; }
.big { width: 47px; height: 42px; display: grid; place-items: center; border: 1px solid transparent; }
.big.on { background: #b7d5f3; border-color: #1763b0; }
.p-plane { width: 136px; }
.p-plane .body { padding-left: 6px; gap: 6px; }
.vbtn { display: flex; flex-direction: column; align-items: center; }
.p-plane .vbtn { padding: 7px 0 18px; gap: 4px; }
.stack2 { display: flex; flex-direction: column; gap: 4px; padding-top: 20px; }
.stack2 .row { height: 27px; padding-left: 3px; gap: 5px; }
.stack2 .show { width: 68px; background: #c9dff3; border: 1px solid #4a90d0; color: #a0a8b0; padding-left: 2px; gap: 6px; }
.p-clip { width: 95px; }
.p-clip .body { padding-left: 12px; gap: 14px; }
.p-clip .vbtn { color: #aaa; padding: 4px 0 18px; gap: 4px; }
.p-clip .vbtn span { margin-top: 2px; }
.trio { display: flex; flex-direction: column; gap: 9px; padding-top: 6px; }
.p-geo { width: 140px; }
.p-geo .body { flex-direction: column; padding: 21px 0 0 6px; gap: 5px; }
.grow { display: flex; gap: 12px; height: 26px; }
.grow .row { gap: 6px; }
.grow .row .drop { margin-left: 5px; }
.small { display: flex; align-items: center; gap: 8px; }
.p-modify { width: 214px; }
.p-modify .body { padding: 5px 0 0 5px; gap: 8px; }
.p-modify .tall { gap: 3px; margin: 0; }
.mods { display: grid; grid-template-columns: repeat(5, 31px); grid-template-rows: repeat(3, 31px); place-items: center; margin-top: -3px; }
.mods svg { width: 22px; height: 22px; }
.glyph-p { font: 700 12px "Open Sans", sans-serif; fill: #b7b7b7; text-anchor: middle; }
.p-measure { width: 75px; border-right: 5px solid #e4eed4; }
.p-measure .body { flex-direction: column; padding: 8px 0 0 6px; gap: 8px; }
.mrow { display: flex; align-items: center; gap: 8px; }
.p-form { width: 61px; }
.p-form .body { position: relative; justify-content: center; padding-right: 3px; }
.form { padding-top: 3px; }
.form span { margin-top: 6px; }
.formdrop { position: absolute; right: 5px; top: 72px; }
.p-gls { margin-left: 2px; border: 0; }
.gbtn { display: flex; flex-direction: column; align-items: center; padding: 6px 4px 0; white-space: nowrap; }
.gbtn svg { width: 40px; height: 40px; background: #fff; margin-bottom: 4px; }
.gbtn.box3d { width: 71px; }
.glyph-b { font: 15px "Open Sans", sans-serif; fill: #3ac568; stroke: #3ac568; stroke-width: 0.4; }

.options { flex: none; height: 32px; background: #e4eed4; display: flex; align-items: center; color: #000; white-space: nowrap; overflow: hidden; }
.context { width: 43px; color: #aaa; text-indent: -3px; flex: none; }
.options label { display: flex; align-items: center; gap: 3px; }
.group { display: flex; align-items: center; border-left: 1px solid #8d9486; height: 26px; margin-top: 2px; flex: none; }
.g1 { width: 255px; padding-left: 22px; gap: 4px; }
.g2 { width: 56px; padding-left: 13px; }
.g3 { width: 198px; padding-left: 13px; }
.g4 { padding-left: 13px; gap: 8px; margin-right: 17px; }
.proj { display: flex; align-items: center; gap: 5px; margin-top: 2px; }
.proj label { margin-right: 1px; }
.pick { position: relative; display: block; height: 27px; }
.pick::after { content: ""; position: absolute; right: 5px; top: 11px; border: 5px solid transparent; border-top: 6px solid #000; border-bottom: 0; pointer-events: none; }
.pick select { appearance: none; width: 100%; height: 100%; border: 1px solid #b5b5b5; border-radius: 0; padding: 0 3px; background: linear-gradient(#f2f2f2, #dadada); color: #000; }
.w-plane { width: 150px; }
.w-proj { width: 168px; }
.pick.off select { background: #f4f4f4; border: 2px solid #ccc; color: #777; opacity: 1; padding-left: 2px; }
.pick.off::after { border-top-color: #777; }
.pickplane { width: 27px; height: 27px; border: 1px solid #aaa; border-radius: 3px; background: #f4f4f4; display: grid; place-items: center; }
input[type=checkbox] { appearance: none; width: 16px; height: 16px; margin: 0; flex: none; border: 1px solid #858585; background: linear-gradient(135deg, #d3d6da, #fafafa); box-shadow: inset 0 0 0 1px #f4f4f4; display: grid; place-items: center; }
input[type=checkbox]:checked::before { content: ""; width: 10px; height: 11px; background: #3b4f93; clip-path: polygon(0 50%, 20% 40%, 40% 68%, 80% 0, 100% 0, 45% 100%, 30% 100%); }
input[type=checkbox]:disabled { border-color: #b5b5b5; background: #f7f7f7; }

.work { flex: 1; display: flex; min-height: 0; color: #000; }
.dockhead { height: 27px; border-top: 1px solid #e6edf3; background: #bfcddb; display: flex; align-items: center; justify-content: space-between; padding: 0 4px 1px; color: #48525c; font-size: 14px; }
.close { display: grid; place-items: center; margin-left: auto; }
.browser { width: 90px; flex: none; display: flex; flex-direction: column; }
.tree { flex: 1; margin: 2px 1px 0 0; border-top: 1px solid #777; border-right: 1px solid #ddd; background: #fff; overflow: hidden; }
.leaf { height: 22px; display: flex; justify-content: flex-end; white-space: nowrap; line-height: 22px; }
.e5 { width: 6px; }
.e13 { width: 13px; }
.e24 { width: 25px; }
.sel { background: #e2e2e2; padding-right: 2px; margin-right: -2px; }
.props { width: 287px; margin-left: 4px; flex: none; display: flex; flex-direction: column; }
.sheet { flex: 1; margin: 2px 1px 0 1px; border: 1px solid #777; border-width: 1px 1px 0 1px; border-right-color: #ddd; background: #fff; }
.preview { height: 91px; background: linear-gradient(#f7f7f7, #e9e9e9); border: 1px solid #ddd; display: flex; align-items: center; justify-content: space-between; padding: 0 2px 0 3px; }
.thumb { border: 1px solid #ddd; background: #eee; }
.drop.wide { border-width: 5px 5px 0; border-top-color: #999; }
.typerow { display: flex; background: #f0f0f0; height: 29px; align-items: center; gap: 6px; padding-bottom: 1px; }
.w-type { width: 189px; }
.w-type select { border: 1px solid #707070; border-radius: 3px; padding: 0 2px; }
.edittype { display: flex; align-items: center; gap: 3px; color: #a3a3a3; white-space: nowrap; padding-bottom: 3px; }
.grid { border-collapse: separate; border-spacing: 0; width: 100%; table-layout: fixed; }
.c-name { width: 134px; }
.c-end { width: 15px; }
.grid tr { height: 24px; }
.grid td { height: 24px; padding: 0 2px 3px; border-bottom: 1px dotted #777; border-right: 1px dotted #777; white-space: nowrap; line-height: 20px; vertical-align: middle; }
.grid td:first-child { padding-left: 10px; }
.grid th { height: 24px; padding: 0 5px 2px 2px; background: #dcdcdc; font-weight: 400; text-align: left; line-height: 20px; }
.grid th svg { float: right; margin-top: 4px; }
.grid td.focus { border: 1px solid #000; padding-bottom: 0; }
.grid td.check { padding-bottom: 0; }
.grid td.hasbtn { padding: 0 0 0 1px; }
.edit { display: block; width: 100%; height: 23px; line-height: 20px; border: 1px solid #777; border-right-width: 2px; border-bottom-width: 2px; border-radius: 2px; background: linear-gradient(#f4f4f4, #d2d2d2); color: #000; }
.ro { color: #777; }
.view { flex: 1; min-width: 0; margin-left: 5px; border-left: 2px solid #6d6d6d; border-top: 1px solid #777; background: #fff; }
.scene { width: 100%; height: 100%; overflow: hidden; }
.ref, .level, .mark { shape-rendering: crispEdges; }
.ref { fill: none; stroke: #007d00; stroke-width: 1; }
.long { stroke-dasharray: 9 9; }
.short { stroke-dasharray: 5 5; }
.mid { stroke-dasharray: 8 8; }
.level { stroke: #000; stroke-width: 1; stroke-dasharray: 1 14 18 12; }
.outline { fill: none; stroke: #4a7fd0; stroke-width: 3; }
.mark { stroke: #0090c8; stroke-width: 1; }
.mark circle { fill: #29bdfc; stroke: none; }
.soft { stroke: #58b6dc; }
.soft circle { fill: #55cdff; }
.mark .snap { fill: #d94fd4; stroke: #d94fd4; stroke-dasharray: 3 1; }
.mark .core { fill: #2d83dd; }
.mark .cross { stroke: #5a35b5; stroke-width: 2; }
.mark text { font: 11px "Liberation Sans", sans-serif; fill: #0a38b0; stroke: none; text-anchor: middle; }
```
